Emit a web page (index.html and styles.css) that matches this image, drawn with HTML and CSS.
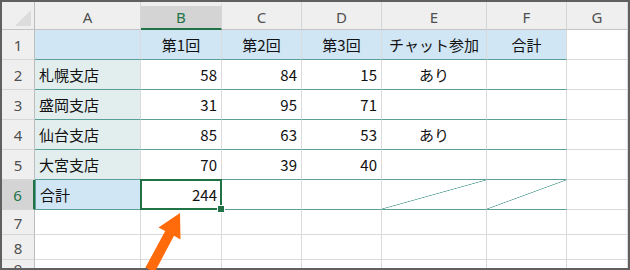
FILE: index.html
```html
<!DOCTYPE html>
<html lang="ja">
<head>
<meta charset="utf-8">
<link rel="stylesheet" href="styles.css">
</head>
<body>
<div class="frame">
  <div class="sheet">
    <div class="c hd corner"><svg class="tri" width="18" height="18" viewBox="0 0 18 18"><polygon points="17,1 17,17 1,17" fill="#dcdcdc"/></svg></div>
    <div class="c hd">A</div>
    <div class="c hd sel-col">B</div>
    <div class="c hd">C</div>
    <div class="c hd">D</div>
    <div class="c hd">E</div>
    <div class="c hd">F</div>
    <div class="c hd">G</div>

    <div class="c rh">1</div>
    <div class="c blue tb"></div>
    <div class="c blue tb ctr">第1回</div>
    <div class="c blue tb ctr">第2回</div>
    <div class="c blue tb ctr">第3回</div>
    <div class="c blue tb ctr">チャット参加</div>
    <div class="c blue tb ctr">合計</div>
    <div class="c"></div>

    <div class="c rh">2</div>
    <div class="c teal tb">札幌支店</div>
    <div class="c tb num">58</div>
    <div class="c tb num">84</div>
    <div class="c tb num">15</div>
    <div class="c tb ctr">あり</div>
    <div class="c tb"></div>
    <div class="c"></div>

    <div class="c rh">3</div>
    <div class="c teal tb">盛岡支店</div>
    <div class="c tb num">31</div>
    <div class="c tb num">95</div>
    <div class="c tb num">71</div>
    <div class="c tb"></div>
    <div class="c tb"></div>
    <div class="c"></div>

    <div class="c rh">4</div>
    <div class="c teal tb">仙台支店</div>
    <div class="c tb num">85</div>
    <div class="c tb num">63</div>
    <div class="c tb num">53</div>
    <div class="c tb ctr">あり</div>
    <div class="c tb"></div>
    <div class="c"></div>

    <div class="c rh">5</div>
    <div class="c teal tb">大宮支店</div>
    <div class="c tb num">70</div>
    <div class="c tb num">39</div>
    <div class="c tb num">40</div>
    <div class="c tb"></div>
    <div class="c tb"></div>
    <div class="c"></div>

    <div class="c rh sel-row">6</div>
    <div class="c blue tb boxed">合計</div>
    <div class="c tb num active">244<span class="selbox"><span class="handle"></span></span></div>
    <div class="c tb"></div>
    <div class="c tb"></div>
    <div class="c tb diag"></div>
    <div class="c tb diag"></div>
    <div class="c"></div>

    <div class="c rh">7</div>
    <div class="c"></div><div class="c"></div><div class="c"></div><div class="c"></div><div class="c"></div><div class="c"></div><div class="c"></div>

    <div class="c rh">8</div>
    <div class="c"></div><div class="c"></div><div class="c"></div><div class="c"></div><div class="c"></div><div class="c"></div><div class="c"></div>

    <div class="c rh">9</div>
    <div class="c"></div><div class="c"></div><div class="c"></div><div class="c"></div><div class="c"></div><div class="c"></div><div class="c"></div>
  </div>
  <svg class="arrow" width="630" height="272" viewBox="0 0 630 272">
    <polygon points="180,213 180.5,239.5 174,235.8 154.6,272.4 145.4,267.6 165.2,231 158.5,227.5" fill="#ff6b0b"/>
  </svg>
</div>
</body>
</html>
```

FILE: styles.css
```css
html, body {
  margin: 0;
  padding: 0;
  overflow: hidden;
  background: #ffffff;
}

.frame {
  position: relative;
  width: 630px;
  height: 270px;
  box-sizing: border-box;
  border: 2px solid #606060;
  background: #ffffff;
}

.sheet {
  display: grid;
  grid-template-columns: 33px 106px 81px 80px 80px 105px 80px 1fr;
  grid-template-rows: 28px 30px 30px 30px 30px 30px 30px 25px 25px 1fr;
  height: 266px;
  overflow: hidden;
  font-family: "Noto Sans CJK JP", "Noto Sans", sans-serif;
  font-size: 15px;
  color: #111;
}

.c {
  position: relative;
  box-sizing: border-box;
  border-right: 1px solid #dadada;
  border-bottom: 1px solid #dadada;
  display: flex;
  align-items: center;
  padding: 0 4px;
  white-space: nowrap;
  line-height: 1;
}

.hd {
  background: #efefef;
  justify-content: center;
  color: #505050;
  font-family: "Noto Sans", "Liberation Sans", sans-serif;
  font-size: 15px;
  border-bottom-color: #c4c4c4;
  border-right-color: #d6d6d6;
  padding-top: 3px;
}

.corner {
  border-right-color: #bdbdbd;
  padding: 0;
}

.tri {
  position: absolute;
  right: 2px;
  bottom: 2px;
}

.sel-col {
  background: #d4d4d4;
  color: #217346;
  border-top: 4px solid #efefef;
  border-bottom: 2px solid #217346;
  padding-top: 0;
}

.rh {
  background: #efefef;
  justify-content: center;
  color: #505050;
  font-family: "Noto Sans", "Liberation Sans", sans-serif;
  border-right-color: #bdbdbd;
  border-bottom-color: #d6d6d6;
  padding: 2px 0 0 0;
}

.sel-row {
  background: #d4d4d4;
  color: #217346;
  border-right: 2px solid #217346;
}

.blue {
  background: #d0e6f5;
}

.teal {
  background: #e2eeee;
}

.tb {
  border-bottom-color: #5aa098;
}

.ctr {
  justify-content: center;
}

.num {
  justify-content: flex-end;
}

.boxed {
  border-left: 1px solid #5aa098;
  border-right: 1px solid #5aa098;
}

.diag {
  background: linear-gradient(to top left, transparent calc(50% - 0.7px), #5aa098 50%, transparent calc(50% + 0.7px));
}

.active {
  overflow: visible;
}

.selbox {
  position: absolute;
  left: -1px;
  top: -1px;
  right: -1px;
  bottom: -1px;
  border: 2px solid #217346;
  z-index: 2;
}

.handle {
  position: absolute;
  right: -5px;
  bottom: -5px;
  width: 6px;
  height: 6px;
  background: #217346;
  border: 1px solid #ffffff;
}

.arrow {
  position: absolute;
  left: -2px;
  top: -2px;
  z-index: 5;
  pointer-events: none;
}
```
